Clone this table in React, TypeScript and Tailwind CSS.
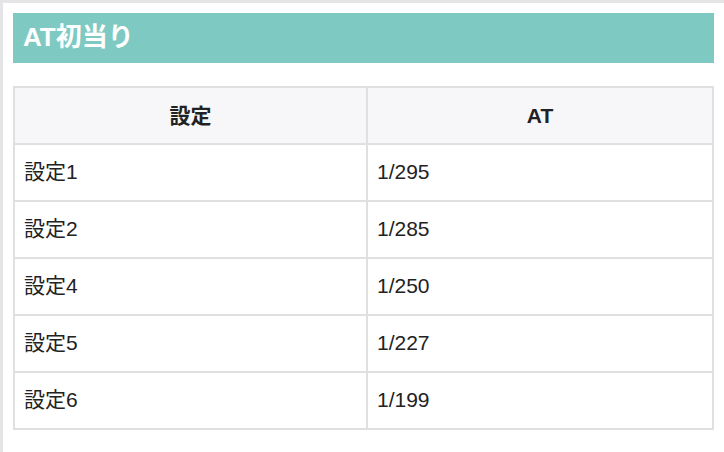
const rows = [
  { label: "設定1", at: "1/295" },
  { label: "設定2", at: "1/285" },
  { label: "設定4", at: "1/250" },
  { label: "設定5", at: "1/227" },
  { label: "設定6", at: "1/199" },
]

export default function App() {
  return (
    <div
      className="min-h-screen border-t-[3px] border-l-[3px] border-[#e5e5e8] bg-white px-[10px] pt-[10px] text-[#222]"
      style={{ fontFamily: '"Liberation Sans", Arial, "Noto Sans CJK JP", sans-serif' }}
    >
      {/* 見出し */}
      <h2 className="flex h-[50px] items-center bg-[#7ecac3] px-[10px] pb-[2px] text-[26px] font-bold text-white">
        AT初当り
      </h2>

      <table className="mt-[23px] w-full table-fixed border-collapse border-2 border-[#e0e0e2] text-[21px]">
        <thead>
          <tr className="h-[57px] bg-[#f7f7f9]">
            <th className="w-[353px] border-2 border-[#e0e0e2] text-center font-bold">設定</th>
            <th className="border-2 border-[#e0e0e2] text-center font-bold">AT</th>
          </tr>
        </thead>
        <tbody>
          {rows.map((r) => (
            <tr key={r.label} className="h-[57px]">
              <td className="border-2 border-[#e0e0e2] px-[9px] pb-[1px]">{r.label}</td>
              <td className="border-2 border-[#e0e0e2] px-[9px] pb-[1px]">{r.at}</td>
            </tr>
          ))}
        </tbody>
      </table>
    </div>
  )
}
